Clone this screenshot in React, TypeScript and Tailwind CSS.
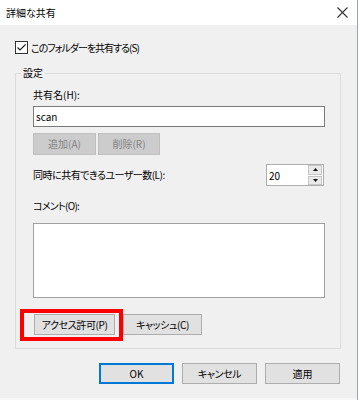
import React from 'react';

const FONT = "[font-family:'Noto_Sans_CJK_JP','Noto_Sans',sans-serif] [font-feature-settings:'palt']";

function Btn({ label, disabled, primary, className = '' }: { label: string; disabled?: boolean; primary?: boolean; className?: string }) {
  return (
    <div
      className={
        'flex h-[21px] items-center justify-center border text-[10px] leading-none ' +
        (disabled
          ? 'border-[#bfbfbf] bg-[#cccccc] text-[#838383] '
          : primary
            ? 'border-2 border-[#0078d7] bg-[#e1e1e1] text-black '
            : 'border-[#adadad] bg-[#e1e1e1] text-black ') +
        className
      }
    >
      {label}
    </div>
  );
}

export default function App() {
  return (
    <div className={'flex h-[400px] w-[360px] bg-white text-black ' + FONT}>
      <div className="flex w-[357px] flex-col border-b-2 border-[#f7f7f7]">
        {/* Title bar */}
        <div className="flex h-[25px] items-center justify-between bg-white pl-[6px] pr-[8px]">
          <span className="text-[10px] leading-none">詳細な共有</span>
          <svg width="11" height="11" viewBox="0 0 11 11" className="mr-[1px]">
            <path d="M0.5 0.5 L10.5 10.5 M10.5 0.5 L0.5 10.5" stroke="#333" strokeWidth="1.1" />
          </svg>
        </div>

        {/* Body */}
        <div className="flex flex-1 flex-col bg-[#f0f0f0] pl-[15px] pr-[16px]">
          <div className="mt-[16px] flex h-[13px] items-center gap-[3px]">
            <svg width="13" height="13" viewBox="0 0 13 13">
              <rect x="0.5" y="0.5" width="12" height="12" fill="#fff" stroke="#333" />
              <path d="M2.5 6.5 L5 9 L10.5 3.5" fill="none" stroke="#222" strokeWidth="1.2" />
            </svg>
            <span className="text-[10px] leading-none tracking-[-1px]">このフォルダーを共有する(S)</span>
          </div>

          <fieldset className="mt-[12px] border border-[#dcdcdc]">
            <legend className="ml-[5px] px-[2px] text-[10px] leading-[14px]">設定</legend>
            <div className="flex flex-col pb-[7px] pl-[17px] pr-[15px] pt-[8px]">
              <div className="text-[10px] leading-[14px]">共有名(H):</div>
              <div className="mt-[4px] flex h-[21px] items-center border border-[#7a7a7a] bg-white px-[2px] text-[10px]">
                scan
              </div>
              <div className="mt-[6px] flex gap-[2px]">
                <Btn label="追加(A)" disabled className="h-[22px] w-[63px]" />
                <Btn label="削除(R)" disabled className="h-[22px] w-[62px]" />
              </div>
              <div className="mt-[9px] flex h-[22px] items-center justify-between pr-px">
                <span className="text-[10px] leading-none tracking-[-0.5px]">同時に共有できるユーザー数(L):</span>
                <div className="flex h-[22px] w-[58px] items-center border border-[#adadad] bg-white">
                  <span className="flex-1 pl-[2px] text-[10px]">20</span>
                  <div className="mr-px flex h-[20px] w-[14px] flex-col gap-px">
                    <div className="flex flex-1 items-center justify-center border border-[#c7c7c7] bg-[#e9e9e9]">
                      <svg width="5" height="3" viewBox="0 0 5 3"><path d="M0 3 L2.5 0 L5 3Z" fill="#111" /></svg>
                    </div>
                    <div className="flex flex-1 items-center justify-center border border-[#c7c7c7] bg-[#e9e9e9]">
                      <svg width="5" height="3" viewBox="0 0 5 3"><path d="M0 0 L2.5 3 L5 0Z" fill="#111" /></svg>
                    </div>
                  </div>
                </div>
              </div>
              <div className="mt-[13px] text-[10px] leading-[14px] tracking-[-0.7px]">コメント(O):</div>
              <div className="mt-[10px] h-[75px] border border-[#a0a0a0] bg-white" />
              <div className="mt-[11px] flex items-start">
                <div className="ml-[-13px] border-4 border-[#ff0000] pb-[2px] pl-[10px] pr-[4px] pt-px">
                  <Btn label="アクセス許可(P)" className="w-[81px] tracking-[-0.4px]" />
                </div>
                <Btn label="キャッシュ(C)" className="mt-[5px] w-[79px] tracking-[-0.4px]" />
              </div>
            </div>
          </fieldset>

          <div className="mt-[14px] flex justify-end gap-[8px] pr-px">
            <Btn label="OK" primary className="w-[75px]" />
            <Btn label="キャンセル" className="w-[75px] tracking-[-0.4px]" />
            <Btn label="適用" className="w-[75px]" />
          </div>
        </div>
      </div>
      <div className="w-px bg-[#9ba3b0]" />
      <div className="flex-1 bg-white" />
    </div>
  );
}
